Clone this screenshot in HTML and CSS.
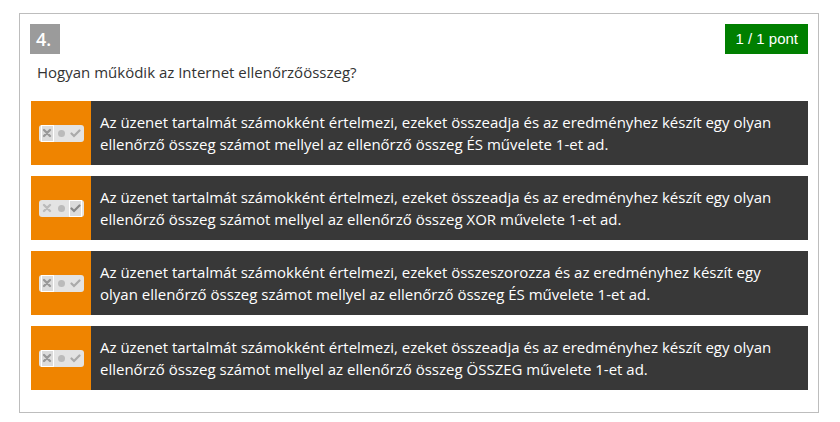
FILE: index.html
```html
<!DOCTYPE html>
<html>
<head>
<meta charset="utf-8">
<link rel="stylesheet" href="styles.css">
</head>
<body>
<div class="panel">
  <div class="head">
    <div class="num">4.</div>
    <div class="badge">1 / 1 pont</div>
  </div>
  <div class="question">Hogyan működik az Internet ellenőrzőösszeg?</div>
  <div class="answers">
    <div class="answer">
      <div class="side">
        <div class="toggle">
          <span class="opt sel"><svg width="10" height="10" viewBox="0 0 10 10"><path d="M2 2L8 8M8 2L2 8" stroke="#999" stroke-width="2.4" stroke-linecap="round"/></svg></span>
          <span class="opt"><span class="dot"></span></span>
          <span class="opt"><svg width="11" height="10" viewBox="0 0 11 10"><path d="M1.5 5.5L4 8L9.5 2.5" stroke="#aaa" stroke-width="2.2" fill="none" stroke-linecap="round"/></svg></span>
        </div>
      </div>
      <div class="text">Az üzenet tartalmát számokként értelmezi, ezeket összeadja és az eredményhez készít egy olyan ellenőrző összeg számot mellyel az ellenőrző összeg ÉS művelete 1-et ad.</div>
    </div>
    <div class="answer">
      <div class="side">
        <div class="toggle">
          <span class="opt"><svg width="10" height="10" viewBox="0 0 10 10"><path d="M2 2L8 8M8 2L2 8" stroke="#bbb" stroke-width="2.4" stroke-linecap="round"/></svg></span>
          <span class="opt"><span class="dot"></span></span>
          <span class="opt sel"><svg width="11" height="10" viewBox="0 0 11 10"><path d="M1.5 5.5L4 8L9.5 2.5" stroke="#888" stroke-width="2.2" fill="none" stroke-linecap="round"/></svg></span>
        </div>
      </div>
      <div class="text">Az üzenet tartalmát számokként értelmezi, ezeket összeadja és az eredményhez készít egy olyan ellenőrző összeg számot mellyel az ellenőrző összeg XOR művelete 1-et ad.</div>
    </div>
    <div class="answer">
      <div class="side">
        <div class="toggle">
          <span class="opt sel"><svg width="10" height="10" viewBox="0 0 10 10"><path d="M2 2L8 8M8 2L2 8" stroke="#999" stroke-width="2.4" stroke-linecap="round"/></svg></span>
          <span class="opt"><span class="dot"></span></span>
          <span class="opt"><svg width="11" height="10" viewBox="0 0 11 10"><path d="M1.5 5.5L4 8L9.5 2.5" stroke="#aaa" stroke-width="2.2" fill="none" stroke-linecap="round"/></svg></span>
        </div>
      </div>
      <div class="text">Az üzenet tartalmát számokként értelmezi, ezeket összeszorozza és az eredményhez készít egy olyan ellenőrző összeg számot mellyel az ellenőrző összeg ÉS művelete 1-et ad.</div>
    </div>
    <div class="answer">
      <div class="side">
        <div class="toggle">
          <span class="opt sel"><svg width="10" height="10" viewBox="0 0 10 10"><path d="M2 2L8 8M8 2L2 8" stroke="#999" stroke-width="2.4" stroke-linecap="round"/></svg></span>
          <span class="opt"><span class="dot"></span></span>
          <span class="opt"><svg width="11" height="10" viewBox="0 0 11 10"><path d="M1.5 5.5L4 8L9.5 2.5" stroke="#aaa" stroke-width="2.2" fill="none" stroke-linecap="round"/></svg></span>
        </div>
      </div>
      <div class="text">Az üzenet tartalmát számokként értelmezi, ezeket összeadja és az eredményhez készít egy olyan ellenőrző összeg számot mellyel az ellenőrző összeg ÖSSZEG művelete 1-et ad.</div>
    </div>
  </div>
</div>
</body>
</html>
```

FILE: styles.css
```css
html, body {
  margin: 0;
  padding: 0;
  background: #fff;
}
body {
  padding: 13px 0 0 19px;
  font-family: "Open Sans", "DejaVu Sans", sans-serif;
}
.panel {
  width: 800px;
  box-sizing: border-box;
  height: 400px;
  border: 1px solid #bdbdbd;
  padding: 10px 10px 21px 10px;
}
.head {
  display: flex;
  justify-content: space-between;
  align-items: flex-start;
}
.num {
  width: 30px;
  height: 30px;
  background: #9b9b9b;
  color: #fff;
  font-size: 18px;
  line-height: 30px;
  padding-left: 6px;
  box-sizing: border-box;
  font-weight: 600;
}
.badge {
  height: 30px;
  line-height: 30px;
  background: #007f00;
  color: #fff;
  font-family: "Liberation Sans", Arial, sans-serif;
  font-size: 15px;
  padding: 0 10px;
}
.question {
  margin: 5px 0 0 7px;
  font-size: 15px;
  line-height: 26px;
  color: #333;
}
.answers {
  margin-top: 16px;
  margin-left: 1px;
  display: flex;
  flex-direction: column;
  gap: 11px;
}
.answer {
  display: flex;
  height: 64px;
  background: #383838;
}
.side {
  width: 60px;
  flex: none;
  background: #ef8400;
  display: flex;
  align-items: center;
  justify-content: center;
}
.toggle {
  display: flex;
  align-items: center;
  height: 17px;
  background: #e3e3e3;
  border-radius: 3px;
  padding: 0 2px;
  gap: 1px;
}
.opt {
  width: 13px;
  height: 17px;
  display: flex;
  align-items: center;
  justify-content: center;
  box-sizing: border-box;
}
.opt.sel {
  border: 1px solid #fff;
  background: #dcdcdc;
}
.dot {
  width: 7px;
  height: 7px;
  border-radius: 50%;
  background: #bbb;
}
.text {
  padding: 10px 20px 10px 9px;
  color: #fff;
  font-size: 15px;
  line-height: 22px;
  font-weight: 500;
}
```
